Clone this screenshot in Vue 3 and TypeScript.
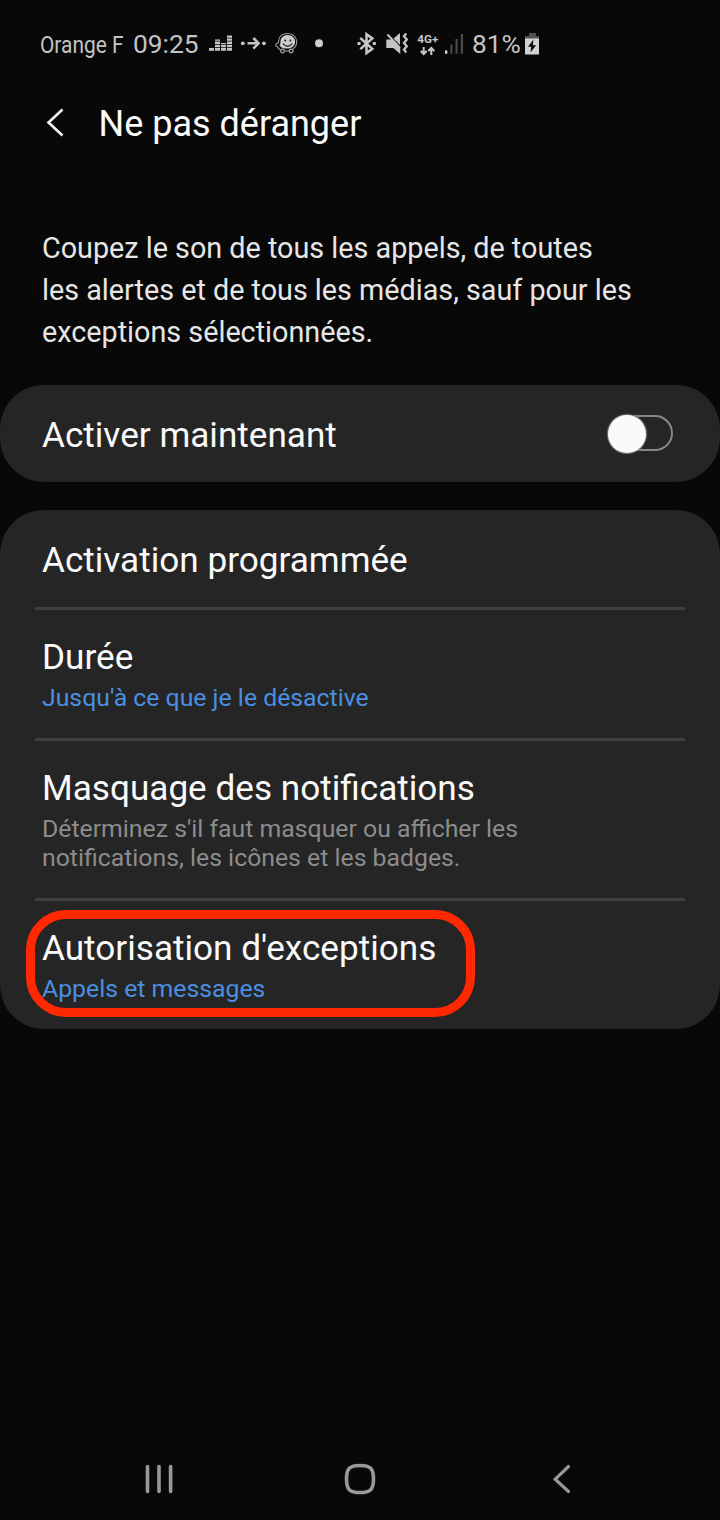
<script setup lang="ts">
interface Row {
  title: string
  lines: string[]
  tone: 'accent' | 'muted'
  highlighted?: boolean
}

const rows: Row[] = [
  { title: 'Activation programmée', lines: [], tone: 'muted' },
  { title: 'Durée', lines: ["Jusqu'à ce que je le désactive"], tone: 'accent' },
  {
    title: 'Masquage des notifications',
    lines: ["Déterminez s'il faut masquer ou afficher les", 'notifications, les icônes et les badges.'],
    tone: 'muted',
  },
  { title: "Autorisation d'exceptions", lines: ['Appels et messages'], tone: 'accent', highlighted: true },
]

const intro: string[] = [
  'Coupez le son de tous les appels, de toutes',
  'les alertes et de tous les médias, sauf pour les',
  'exceptions sélectionnées.',
]
</script>

<template>
  <main class="screen">
    <div class="status">
      <span class="carrier">Orange F</span>
      <span class="clock">09:25</span>
      <svg class="notifs" width="120" height="32" viewBox="205 28 120 32">
        <g fill="#c4c4c4">
          <path d="M209 48h5v2.8h-5z" />
          <path d="M215 48h5v2.8h-5zM215 44.700h5v2.500h-5zM215 41.600h5v2.300h-5zM215 39.600h5v1.200h-5z" />
          <path d="M221 48h5v2.800h-5zM221 44.700h5v2.500h-5zM221 43h5v1h-5z" />
          <path d="M227 48h5v2.800h-5zM227 44.700h5v2.500h-5zM227 41.600h5v2.300h-5zM227 38.500h5v2.300h-5zM227 35.600h5v2.200h-5z" />
          <circle cx="242.800" cy="43.300" r="1.900" />
          <circle cx="263.900" cy="43.300" r="1.900" />
        </g>
        <path d="M247.500 43.300h11M253.300 38l5.300 5.300-5.300 5.300" fill="none" stroke="#c4c4c4" stroke-width="2.500" />
        <path d="M277.500 47c-1.500-.5-2-2-1.500-3 2 0 2.500-1 2.700-3.500C279.200 36 283 33.500 287.500 33.500c5.300 0 9.200 3.600 9.200 8.300 0 3-1.500 5.400-3.700 7M277.500 47c.7 1.600 1.800 2.300 3 3M285 51h4" fill="none" stroke="#a0a0a0" stroke-width="1.100" />
        <path d="M280.500 41c.4-3.500 3.400-5.900 7.100-5.900 4.300 0 7.500 2.900 7.500 6.700s-3.400 6.800-7.700 6.800c-3.500 0-6.300-.8-8-3.100 1-.8 1-2.600 1.100-4.500z" fill="#cccccc" />
        <circle cx="282.500" cy="51" r="1.900" fill="#181818" stroke="#a8a8a8" stroke-width="1.200" />
        <circle cx="291.200" cy="51" r="1.900" fill="#181818" stroke="#a8a8a8" stroke-width="1.200" />
        <circle cx="285.200" cy="40.600" r="1" fill="#222" />
        <circle cx="290.400" cy="40.600" r="1" fill="#222" />
        <path d="M283.200 43.400c1.200 3.600 7.600 3.600 8.800 0" fill="none" stroke="#222" stroke-width="1.200" />
        <circle cx="319" cy="43.200" r="4" fill="#cdcdcd" />
      </svg>
      <svg class="system" width="116" height="32" viewBox="352 28 116 32">
        <path d="M360.300 38l12 10.800-5.800 4.200V34.200l5.800 4.200-12 10.700" fill="none" stroke="#c8c8c8" stroke-width="2.500" />
        <path d="M357.500 43.500h3M372.800 43.500h3" stroke="#c8c8c8" stroke-width="2.800" />
        <path d="M386.300 39.500h5l9 9V54l-7-6h-7z" fill="#c4c4c4" />
        <path d="M393.500 38.500l6.500-5.500v12z" fill="#c4c4c4" />
        <path d="M387.500 34.500l12.500 13.500" stroke="#c4c4c4" stroke-width="2" />
        <path d="M406.300 33.500l-2.300 2.800 2.800 3.200-2.800 3.400 2.800 3.400-2.800 3.200 2.300 3" fill="none" stroke="#c4c4c4" stroke-width="2.300" />
        <text class="net" x="417.300" y="42.800" textLength="21" lengthAdjust="spacingAndGlyphs">4G+</text>
        <path d="M423.700 47v6.500M420.700 51l3 3 3-3M431.300 55v-6.500M428.300 51l3-3 3 3" fill="none" stroke="#c8c8c8" stroke-width="2" />
        <path d="M445 50.500h2.300v3.200H445z" fill="#e8e8e8" />
        <path d="M450.300 44.500h2.100v9.200h-2.100zM455.500 39h2.100v14.700h-2.100zM460.800 34h2.200v19.700h-2.200z" fill="#4a4a4a" />
      </svg>
      <span class="percent">81%</span>
      <svg class="battery" width="16" height="24" viewBox="524 32 16 24">
        <path d="M529 33h7v3h3v3h-14v-3h4z" fill="#505050" />
        <path d="M525 38.500h14V54.500h-14z" fill="#d2d2d2" />
        <path d="M533.500 39.500l-5.500 7.300h3.300l-.9 5.700 5.800-7.300h-3.400z" fill="#080808" />
      </svg>
    </div>

    <header class="header">
      <svg class="chevron" width="20" height="30" viewBox="0 0 20 30">
        <path d="M17.500 2.500L3.500 15.500l14 13" fill="none" stroke="#f0f0f0" stroke-width="2.600" />
      </svg>
      <h1 class="heading">Ne pas déranger</h1>
    </header>

    <p class="intro">
      <span v-for="line in intro" :key="line">{{ line }}</span>
    </p>

    <section class="card now">
      <span class="title">Activer maintenant</span>
      <span class="toggle"><span class="knob" /></span>
    </section>

    <section class="card list">
      <div v-for="row in rows" :key="row.title" class="row">
        <span class="title">{{ row.title }}</span>
        <span v-if="row.lines.length" class="sub" :class="row.tone">
          <span v-for="line in row.lines" :key="line">{{ line }}</span>
        </span>
        <span v-if="row.highlighted" class="ring" />
      </div>
    </section>

    <nav class="nav">
      <svg width="30" height="32" viewBox="144 1463 30 32">
        <path d="M147.500 1466.500v25M159 1466.500v25M170.600 1466.500v25" stroke="#989898" stroke-width="3.600" stroke-linecap="round" />
      </svg>
      <svg width="34" height="34" viewBox="343 1462 34 34">
        <path d="M360 1465.500c10.500 0 13.500 3 13.500 13.500s-3 13.500-13.500 13.500-13.500-3-13.500-13.500 3-13.500 13.500-13.500z" fill="none" stroke="#989898" stroke-width="3.600" />
      </svg>
      <svg width="30" height="32" viewBox="551 1463 30 32">
        <path d="M568.500 1466.500l-13.300 12.700 13.300 12.300" fill="none" stroke="#989898" stroke-width="3.200" stroke-linecap="round" />
      </svg>
    </nav>
  </main>
</template>

<style>
html,
body {
  background: #080808;
}
</style>

<style scoped>
.screen {
  width: 720px;
  height: 1520px;
  display: flex;
  flex-direction: column;
  background: #080808;
  color: #fafafa;
  font-family: Roboto, "Liberation Sans", sans-serif;
  overflow: hidden;
}
.status {
  height: 88px;
  flex: none;
  display: flex;
  align-items: center;
  padding-left: 40px;
  color: #c4c4c4;
  white-space: nowrap;
}
.carrier {
  width: 93px;
  flex: none;
  font-size: 24px;
  line-height: 28px;
  padding-top: 2px;
  transform: scaleX(0.87);
  transform-origin: left;
}
.clock {
  width: 72px;
  flex: none;
  font-size: 26.3px;
}
.notifs,
.system,
.battery {
  flex: none;
}
.system {
  margin-left: 27px;
}
.net {
  font: 700 11px Roboto, sans-serif;
  fill: #c8c8c8;
}
.percent {
  width: 52px;
  margin-left: 4px;
  font-size: 26.3px;
  flex: none;
}
.header {
  height: 71px;
  flex: none;
  display: flex;
  align-items: center;
  padding-left: 45px;
}
.chevron {
  margin-top: -4px;
}
.heading {
  margin: 0 0 0 33.5px;
  font-size: 36px;
  line-height: 42px;
  font-weight: 400;
  white-space: nowrap;
}
.intro {
  margin: 68px 0 0 42px;
  height: 158px;
  display: flex;
  flex-direction: column;
  flex: none;
  font-size: 28.75px;
  line-height: 42px;
  color: #e6e6e6;
  white-space: nowrap;
}
.card {
  background: #252525;
  border-radius: 44px;
  flex: none;
}
.now {
  height: 97px;
  display: flex;
  align-items: center;
  justify-content: space-between;
  padding: 0 47px 0 42px;
}
.title {
  display: block;
  font-size: 35.15px;
  line-height: 42px;
  white-space: nowrap;
}
.now .title {
  padding-top: 3px;
}
.toggle {
  width: 65px;
  height: 36px;
  margin-bottom: 1px;
  box-sizing: border-box;
  border: 2px solid #868686;
  border-radius: 18px;
  display: flex;
  align-items: center;
}
.knob {
  width: 38px;
  height: 38px;
  flex: none;
  margin: 1px 0 0 -2px;
  border-radius: 50%;
  background: #fafafa;
  box-shadow: 0 0 1px 1px #777;
}
.list {
  margin-top: 28px;
  height: 519px;
}
.row {
  position: relative;
  padding: 26px 0 26px 42px;
}
.row:first-child {
  padding-top: 29px;
}
.row + .row::before {
  content: "";
  display: block;
  height: 3px;
  margin: -26px 35px 26px -7px;
  background: #3f3f3f;
}
.sub {
  display: flex;
  flex-direction: column;
  margin-top: 5px;
  font-size: 24.8px;
  line-height: 29px;
  white-space: nowrap;
}
.accent {
  color: #4a8fe2;
}
.muted {
  color: #8c8c8c;
}
.ring {
  position: absolute;
  left: 26px;
  top: 12px;
  width: 449px;
  height: 107px;
  box-sizing: border-box;
  border: 9.5px solid #ff2800;
  border-radius: 40px;
}
.nav {
  margin-top: auto;
  height: 82px;
  display: flex;
  align-items: center;
  justify-content: space-between;
  padding: 0 139px 0 144px;
}
.nav svg:nth-child(2) {
  margin-right: 5px;
}
</style>
